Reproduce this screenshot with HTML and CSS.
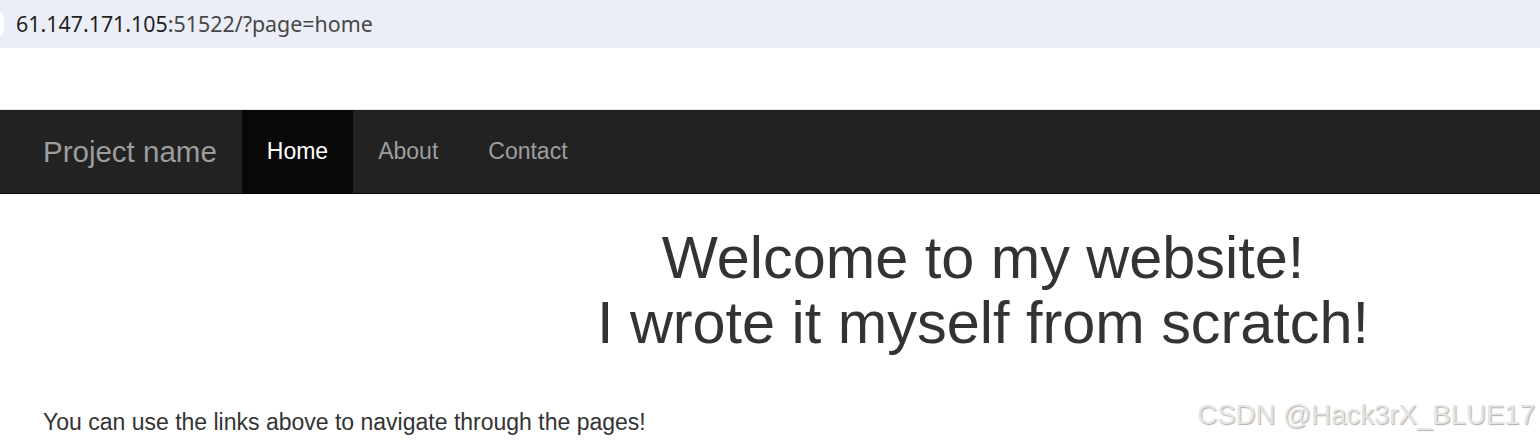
FILE: index.html
```html
<!DOCTYPE html>
<html lang="en">
<head>
<meta charset="UTF-8">
<meta name="viewport" content="width=device-width, initial-scale=1.0">
<title>Project name</title>
<link rel="stylesheet" href="styles.css">
</head>
<body>

<div class="address-bar">
  <span class="address-pill"></span>
  <span class="url"><span class="host">61.147.171.105</span>:51522/?page=home</span>
</div>

<div class="page">
  <nav class="navbar">
    <a class="brand" href="#">Project name</a>
    <ul class="nav">
      <li class="active"><a href="?page=home">Home</a></li>
      <li><a href="?page=about">About</a></li>
      <li><a href="?page=contact">Contact</a></li>
    </ul>
  </nav>

  <div class="content">
    <h1 class="hero">Welcome to my website!<br>I wrote it myself from scratch!</h1>
    <p class="lead">You can use the links above to navigate through the pages!</p>
  </div>

  <div class="watermark">CSDN @Hack3rX_BLUE17</div>
</div>

</body>
</html>
```

FILE: styles.css
```css
body {
  margin: 0;
  font-family: "Liberation Sans", Arial, sans-serif;
  color: #333;
  background: #fff;
  overflow: hidden;
}

.address-bar {
  height: 48px;
  background-color: #ebeef7;
  display: flex;
  align-items: center;
  position: relative;
}

.address-pill {
  position: absolute;
  left: -10px;
  top: 11px;
  width: 14px;
  height: 26px;
  border-radius: 13px;
  background: #fff;
}

.url {
  margin-left: 16px;
  font-family: "Noto Sans", "Open Sans", sans-serif;
  font-size: 21.4px;
  color: #474747;
  margin-top: -2px;
}

.host {
  color: #1f1f1f;
}

.page {
  position: relative;
  height: 395px;
  padding-top: 62px;
  box-sizing: border-box;
}

.navbar {
  display: flex;
  align-items: stretch;
  height: 83px;
  padding-left: 18px;
  background-color: #222;
  border-bottom: 1px solid #080808;
  box-shadow: 0 -1px 0 #e4e4e4;
}

.brand {
  display: flex;
  align-items: center;
  padding: 0 25px;
  font-size: 29.5px;
  color: #9d9d9d;
  text-decoration: none;
}

.nav {
  display: flex;
  list-style: none;
  margin: 0;
  padding: 0;
}

.nav li a {
  display: flex;
  align-items: center;
  height: 100%;
  padding: 0 25px;
  font-size: 23px;
  color: #9d9d9d;
  text-decoration: none;
}

.nav li.active a {
  background-color: #080808;
  color: #fff;
}

.content {
  padding: 0 43px;
}

.hero {
  margin: 31px 0 0 426px;
  font-size: 59.4px;
  font-weight: 500;
  line-height: 1.1;
  text-align: center;
}

.lead {
  margin: 53px 0 0;
  font-size: 23px;
}

.watermark {
  position: absolute;
  right: 5px;
  bottom: 12px;
  font-size: 27.6px;
  color: #e4e4e4;
  text-shadow: 1px 1px 1px #b0b0b0;
}
```
